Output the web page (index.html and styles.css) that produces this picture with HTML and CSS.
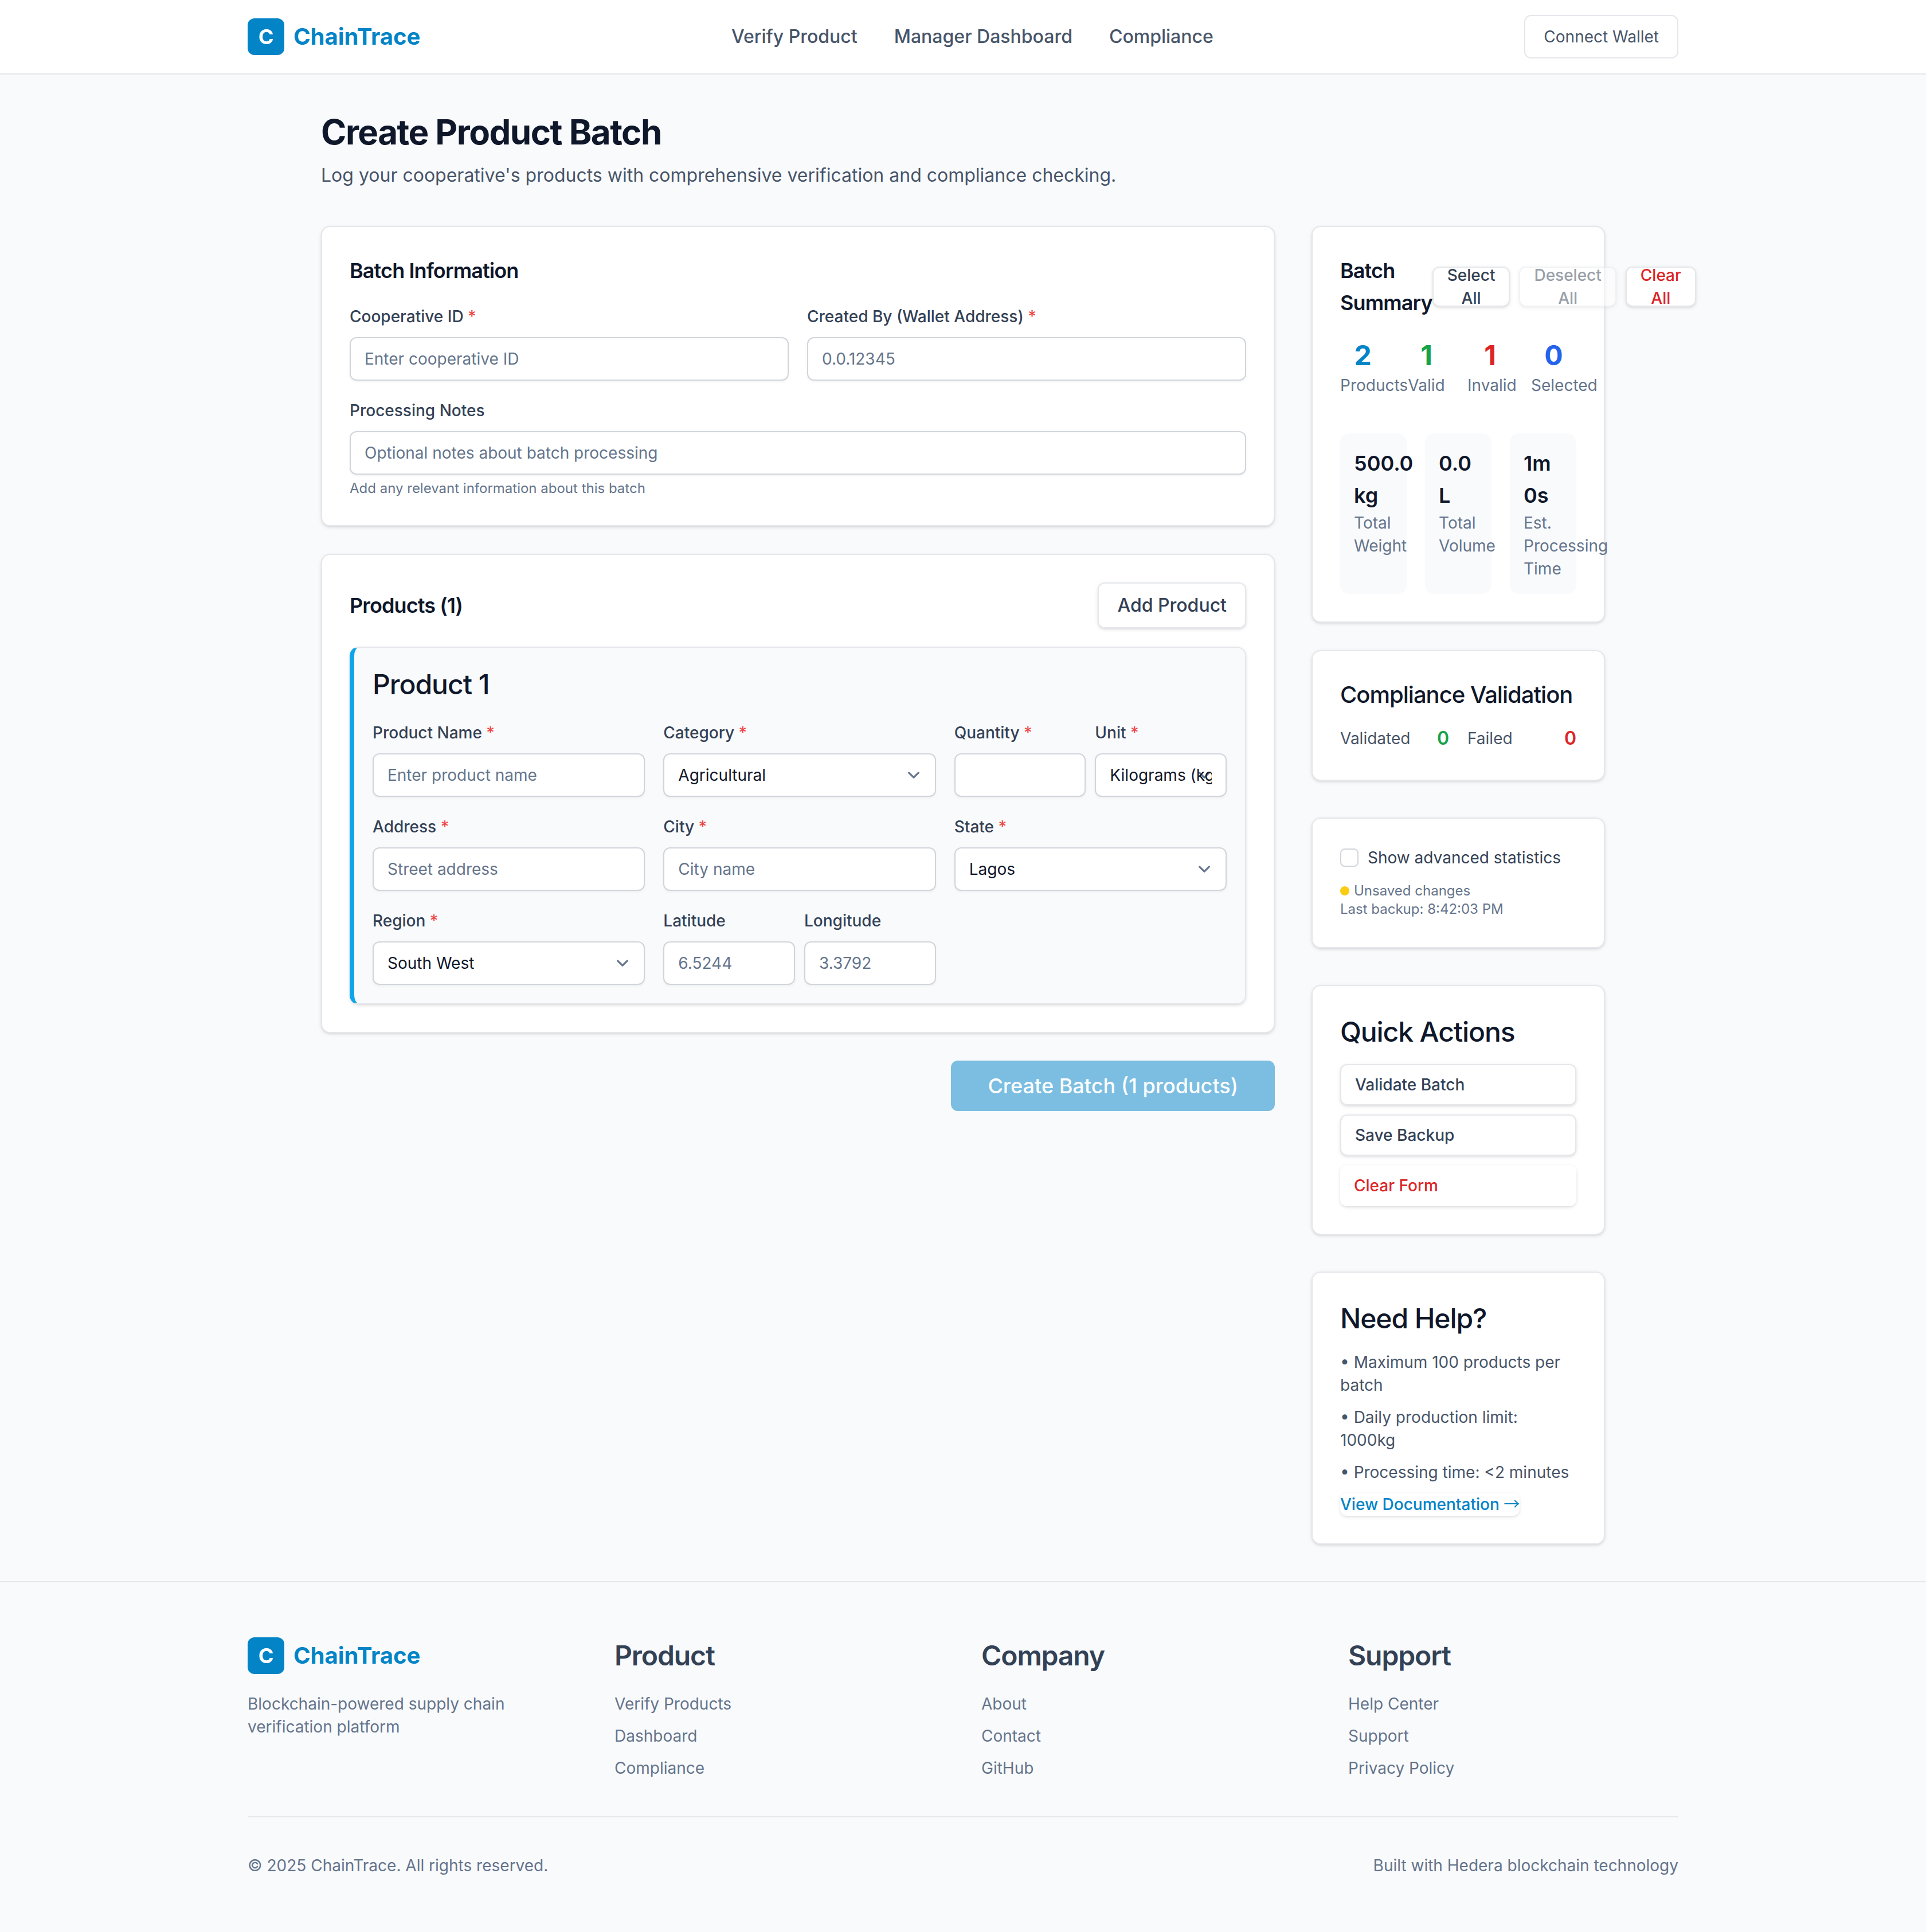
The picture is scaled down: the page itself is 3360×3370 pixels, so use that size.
FILE: index.html
```html
<!DOCTYPE html>
<html lang="en">
<head>
    <meta charset="UTF-8">
    <meta name="viewport" content="width=device-width, initial-scale=1.0">
    <title>ChainTrace - Create Product Batch</title>
    <link rel="stylesheet" href="styles.css">
</head>
<body>

    <header class="site-header">
        <div class="header-inner">
            <a class="brand" href="#"><span class="brand-mark">C</span><span class="brand-name">ChainTrace</span></a>
            <nav class="main-nav">
                <a href="#">Verify Product</a>
                <a href="#">Manager Dashboard</a>
                <a href="#">Compliance</a>
            </nav>
            <button class="btn btn-wallet">Connect Wallet</button>
        </div>
    </header>

    <main class="page">
        <div class="page-head">
            <h1>Create Product Batch</h1>
            <p>Log your cooperative's products with comprehensive verification and compliance checking.</p>
        </div>

        <div class="layout">
            <div class="form-col">
                <section class="card">
                    <h2 class="card-title">Batch Information</h2>
                    <div class="grid-2">
                        <div class="field">
                            <label>Cooperative ID <span class="req">*</span></label>
                            <input type="text" placeholder="Enter cooperative ID">
                        </div>
                        <div class="field">
                            <label>Created By (Wallet Address) <span class="req">*</span></label>
                            <input type="text" placeholder="0.0.12345">
                        </div>
                        <div class="field span-2">
                            <label>Processing Notes</label>
                            <input type="text" placeholder="Optional notes about batch processing">
                            <small class="hint">Add any relevant information about this batch</small>
                        </div>
                    </div>
                </section>

                <section class="card">
                    <div class="products-head">
                        <h2 class="card-title">Products (1)</h2>
                        <button class="btn btn-add">Add Product</button>
                    </div>
                    <div class="product-box">
                        <h3>Product 1</h3>
                        <div class="grid-3">
                            <div class="field">
                                <label>Product Name <span class="req">*</span></label>
                                <input type="text" placeholder="Enter product name">
                            </div>
                            <div class="field">
                                <label>Category <span class="req">*</span></label>
                                <select><option>Agricultural</option></select>
                            </div>
                            <div class="pair">
                                <div class="field">
                                    <label>Quantity <span class="req">*</span></label>
                                    <input type="text">
                                </div>
                                <div class="field">
                                    <label>Unit <span class="req">*</span></label>
                                    <select><option>Kilograms (kg)</option></select>
                                </div>
                            </div>
                            <div class="field">
                                <label>Address <span class="req">*</span></label>
                                <input type="text" placeholder="Street address">
                            </div>
                            <div class="field">
                                <label>City <span class="req">*</span></label>
                                <input type="text" placeholder="City name">
                            </div>
                            <div class="field">
                                <label>State <span class="req">*</span></label>
                                <select><option>Lagos</option></select>
                            </div>
                            <div class="field">
                                <label>Region <span class="req">*</span></label>
                                <select><option>South West</option></select>
                            </div>
                            <div class="pair">
                                <div class="field">
                                    <label>Latitude</label>
                                    <input type="text" placeholder="6.5244">
                                </div>
                                <div class="field">
                                    <label>Longitude</label>
                                    <input type="text" placeholder="3.3792">
                                </div>
                            </div>
                        </div>
                    </div>
                </section>

                <div class="submit-row">
                    <button class="btn-create">Create Batch (1 products)</button>
                </div>
            </div>

            <aside class="side-col">
                <section class="card">
                    <div class="summary-head">
                        <h2 class="card-title">Batch Summary</h2>
                        <div class="summary-actions">
                            <button class="btn btn-mini">Select All</button>
                            <button class="btn btn-mini is-disabled">Deselect All</button>
                            <button class="btn btn-mini is-danger">Clear All</button>
                        </div>
                    </div>
                    <div class="stat-row">
                        <div class="stat"><strong class="c-sky">2</strong><span>Products</span></div>
                        <div class="stat"><strong class="c-green">1</strong><span>Valid</span></div>
                        <div class="stat"><strong class="c-red">1</strong><span>Invalid</span></div>
                        <div class="stat"><strong class="c-blue">0</strong><span>Selected</span></div>
                    </div>
                    <div class="metric-row">
                        <div class="metric"><strong>500.0 kg</strong><span>Total Weight</span></div>
                        <div class="metric"><strong>0.0 L</strong><span>Total Volume</span></div>
                        <div class="metric"><strong>1m 0s</strong><span>Est. Processing Time</span></div>
                    </div>
                </section>

                <section class="card">
                    <h3 class="side-title side-title-sm">Compliance Validation</h3>
                    <div class="validation-row">
                        <div class="validation-item"><span>Validated</span><strong class="c-green">0</strong></div>
                        <div class="validation-item"><span>Failed</span><strong class="c-red">0</strong></div>
                    </div>
                </section>

                <section class="card card-loose">
                    <label class="check-row"><input type="checkbox"><span>Show advanced statistics</span></label>
                    <div class="backup-info">
                        <div class="unsaved"><span class="dot"></span>Unsaved changes</div>
                        <div>Last backup: 8:42:03 PM</div>
                    </div>
                </section>

                <section class="card card-loose">
                    <h3 class="side-title">Quick Actions</h3>
                    <div class="quick-list">
                        <button class="btn btn-quick">Validate Batch</button>
                        <button class="btn btn-quick">Save Backup</button>
                        <button class="btn btn-quick is-clear">Clear Form</button>
                    </div>
                </section>

                <section class="card card-loose">
                    <h3 class="side-title">Need Help?</h3>
                    <ul class="help-list">
                        <li>• Maximum 100 products per batch</li>
                        <li>• Daily production limit: 1000kg</li>
                        <li>• Processing time: &lt;2 minutes</li>
                    </ul>
                    <a class="doc-link" href="#">View Documentation <span class="arrow">→</span></a>
                </section>
            </aside>
        </div>
    </main>

    <footer class="site-footer">
        <div class="footer-inner">
            <div class="footer-cols">
                <div>
                    <a class="brand" href="#"><span class="brand-mark">C</span><span class="brand-name">ChainTrace</span></a>
                    <p class="tagline">Blockchain-powered supply chain verification platform</p>
                </div>
                <div class="footer-col">
                    <h4>Product</h4>
                    <a href="#">Verify Products</a>
                    <a href="#">Dashboard</a>
                    <a href="#">Compliance</a>
                </div>
                <div class="footer-col">
                    <h4>Company</h4>
                    <a href="#">About</a>
                    <a href="#">Contact</a>
                    <a href="#">GitHub</a>
                </div>
                <div class="footer-col">
                    <h4>Support</h4>
                    <a href="#">Help Center</a>
                    <a href="#">Support</a>
                    <a href="#">Privacy Policy</a>
                </div>
            </div>
            <div class="footer-bottom">
                <span>© 2025 ChainTrace. All rights reserved.</span>
                <span>Built with Hedera blockchain technology</span>
            </div>
        </div>
    </footer>

</body>
</html>
```

FILE: styles.css
```css
* {
    box-sizing: border-box;
}
body {
    margin: 0;
    font-family: Inter, "Noto Sans", sans-serif;
    font-size: 28px;
    line-height: 40px;
    color: #0f172a;
    background-color: #f9fafc;
}
a {
    color: inherit;
    text-decoration: none;
}
h1, h2, h3, h4, p, ul {
    margin: 0;
    padding: 0;
}
button, input, select {
    font-family: inherit;
}

/* header */
.site-header {
    background-color: #fff;
    border-bottom: 2px solid #e5e7eb;
}
.header-inner {
    max-width: 2560px;
    height: 128px;
    margin: 0 auto;
    padding: 0 32px;
    display: flex;
    align-items: center;
    justify-content: space-between;
}
.brand {
    display: flex;
    align-items: center;
    gap: 16px;
}
.brand-mark {
    width: 64px;
    height: 64px;
    border-radius: 12px;
    background-color: #0284c7;
    color: #fff;
    font-size: 36px;
    font-weight: 700;
    display: flex;
    align-items: center;
    justify-content: center;
}
.brand-name {
    font-size: 40px;
    line-height: 56px;
    font-weight: 700;
    color: #0284c7;
}
.main-nav {
    display: flex;
    gap: 64px;
    font-size: 32px;
    line-height: 48px;
    font-weight: 500;
    color: #475569;
}
.btn {
    background-color: #fff;
    border: 2px solid #e5e7eb;
    border-radius: 12px;
    box-shadow: 0 2px 6px rgba(0, 0, 0, 0.1), 0 2px 4px -2px rgba(0, 0, 0, 0.1);
    color: #334155;
    font-weight: 500;
    font-size: 28px;
    line-height: 40px;
}
.btn-wallet {
    height: 76px;
    padding: 0 32px;
    box-shadow: none;
    color: #475569;
    font-weight: 400;
}

/* page */
.page {
    max-width: 2304px;
    margin: 0 auto;
    padding: 64px 32px;
}
.page-head {
    margin-bottom: 64px;
}
.page-head h1 {
    font-size: 60px;
    line-height: 72px;
    font-weight: 700;
    letter-spacing: -1.5px;
}
.page-head p {
    margin-top: 16px;
    font-size: 32px;
    line-height: 48px;
    color: #475569;
}
.layout {
    display: grid;
    grid-template-columns: repeat(4, minmax(0, 1fr));
    gap: 64px;
    align-items: start;
}
.form-col {
    grid-column: span 3;
    display: flex;
    flex-direction: column;
    gap: 48px;
}
.side-col {
    display: flex;
    flex-direction: column;
    gap: 48px;
}
.card {
    background-color: #fff;
    border: 2px solid #e5e7eb;
    border-radius: 16px;
    box-shadow: 0 2px 6px rgba(0, 0, 0, 0.1), 0 2px 4px -2px rgba(0, 0, 0, 0.1);
    padding: 48px;
}
.card-loose {
    margin-top: 16px;
}
.card-title {
    font-size: 36px;
    line-height: 56px;
    font-weight: 600;
    letter-spacing: -0.9px;
    margin-bottom: 32px;
}

/* form */
.grid-2 {
    display: grid;
    grid-template-columns: repeat(2, minmax(0, 1fr));
    gap: 32px;
}
.span-2 {
    grid-column: span 2;
}
.grid-3 {
    display: grid;
    grid-template-columns: repeat(3, minmax(0, 1fr));
    gap: 32px;
}
.pair {
    display: grid;
    grid-template-columns: repeat(2, minmax(0, 1fr));
    gap: 16px;
}
.field label {
    display: block;
    margin-bottom: 16px;
    font-weight: 500;
    color: #334155;
}
.req {
    color: #ef4444;
}
.field input, .field select {
    display: block;
    width: 100%;
    height: 76px;
    padding: 16px 24px;
    background-color: #fff;
    border: 2px solid #d1d5db;
    border-radius: 12px;
    box-shadow: 0 2px 4px rgba(0, 0, 0, 0.05);
    font-size: 28px;
    line-height: 40px;
    color: #0f172a;
}
.field select {
    appearance: none;
    background-image: url("data:image/svg+xml,%3Csvg xmlns='http://www.w3.org/2000/svg' fill='none' viewBox='0 0 20 20'%3E%3Cpath stroke='%2364748b' stroke-linecap='round' stroke-linejoin='round' stroke-width='1.5' d='M6 8l4 4 4-4'/%3E%3C/svg%3E");
    background-repeat: no-repeat;
    background-position: right 16px center;
    background-size: 42px 42px;
}
.field input::placeholder {
    color: #64748b;
    opacity: 1;
}
.hint {
    display: block;
    margin-top: 8px;
    font-size: 24px;
    line-height: 32px;
    color: #64748b;
}
.products-head {
    display: flex;
    align-items: center;
    justify-content: space-between;
    margin-bottom: 32px;
}
.products-head .card-title {
    margin-bottom: 0;
}
.btn-add {
    height: 80px;
    padding: 0 32px;
    font-size: 32px;
    line-height: 48px;
}
.product-box {
    background-color: #f9fafc;
    border: 2px solid #e5e7eb;
    border-left: 8px solid #0ea5e9;
    border-radius: 16px;
    box-shadow: 0 2px 6px rgba(0, 0, 0, 0.1), 0 2px 4px -2px rgba(0, 0, 0, 0.1);
    padding: 32px;
}
.product-box h3 {
    font-size: 48px;
    line-height: 64px;
    font-weight: 500;
    letter-spacing: -1px;
    margin-bottom: 32px;
}
.submit-row {
    display: flex;
    justify-content: flex-end;
}
.btn-create {
    height: 88px;
    padding: 0 64px;
    background-color: #0284c7;
    border: none;
    border-radius: 12px;
    color: #fff;
    font-size: 36px;
    line-height: 56px;
    font-weight: 500;
    opacity: 0.5;
}

/* sidebar */
.summary-head {
    display: flex;
    align-items: center;
    margin-bottom: 32px;
}
.summary-head .card-title {
    width: min-content;
    margin-bottom: 0;
}
.summary-actions {
    display: flex;
    flex: none;
    gap: 16px;
}
.btn-mini {
    display: flex;
    align-items: center;
    justify-content: center;
    width: min-content;
    height: 70px;
    padding: 0 24px;
    text-align: center;
}
.is-disabled {
    opacity: 0.5;
}
.is-danger {
    color: #dc2626;
}
.stat-row {
    display: grid;
    grid-template-columns: repeat(4, minmax(0, 1fr));
    gap: 32px;
    text-align: center;
    margin-bottom: 64px;
}
.stat strong {
    display: block;
    font-size: 48px;
    line-height: 64px;
    font-weight: 700;
}
.stat span {
    display: block;
    color: #64748b;
}
.c-sky { color: #0284c7; }
.c-green { color: #16a34a; }
.c-red { color: #dc2626; }
.c-blue { color: #2563eb; }
.metric-row {
    display: grid;
    grid-template-columns: repeat(3, minmax(0, 1fr));
    gap: 32px;
}
.metric {
    background-color: #f9fafc;
    border-radius: 16px;
    padding: 24px;
}
.metric strong {
    display: block;
    font-size: 36px;
    line-height: 56px;
    font-weight: 600;
}
.metric span {
    display: block;
    color: #64748b;
}
.side-title {
    font-size: 48px;
    line-height: 64px;
    font-weight: 500;
    letter-spacing: -1.1px;
    margin-bottom: 24px;
}
.side-title-sm {
    font-size: 40px;
    line-height: 56px;
    letter-spacing: -1px;
}
.validation-row {
    display: grid;
    grid-template-columns: repeat(2, minmax(0, 1fr));
    gap: 32px;
}
.validation-item {
    display: flex;
    align-items: center;
    justify-content: space-between;
    color: #475569;
}
.validation-item strong {
    font-size: 32px;
    line-height: 48px;
    font-weight: 600;
}
.check-row {
    display: flex;
    align-items: center;
    gap: 16px;
    color: #334155;
}
.check-row input {
    appearance: none;
    width: 32px;
    height: 32px;
    margin: 0;
    background-color: #fff;
    border: 2px solid #d1d5db;
    border-radius: 8px;
}
.backup-info {
    margin-top: 22px;
    padding-bottom: 2px;
    font-size: 24px;
    line-height: 32px;
    color: #64748b;
}
.unsaved {
    display: flex;
    align-items: center;
    gap: 8px;
}
.dot {
    width: 16px;
    height: 16px;
    border-radius: 50%;
    background-color: #facc15;
}
.quick-list {
    display: flex;
    flex-direction: column;
    gap: 16px;
}
.btn-quick {
    height: 72px;
    padding: 0 24px;
    text-align: left;
}
.is-clear {
    border: none;
    color: #dc2626;
}
.help-list {
    list-style: none;
    color: #475569;
}
.help-list li {
    margin-bottom: 16px;
}
.doc-link {
    display: inline-block;
    background-color: #fff;
    border-radius: 12px;
    box-shadow: 0 2px 6px rgba(0, 0, 0, 0.1), 0 2px 4px -2px rgba(0, 0, 0, 0.1);
    color: #0284c7;
    font-weight: 500;
}
.arrow {
    font-family: "Noto Sans CJK JP", sans-serif;
    font-weight: 400;
    line-height: 28px;
}

/* footer */
.site-footer {
    border-top: 2px solid #e5e7eb;
    background-color: #f9fafc;
}
.footer-inner {
    max-width: 2560px;
    margin: 0 auto;
    padding: 96px 32px;
}
.footer-cols {
    display: grid;
    grid-template-columns: repeat(4, minmax(0, 1fr));
    gap: 64px;
    padding-bottom: 64px;
    border-bottom: 2px solid #e5e7eb;
}
.tagline {
    margin-top: 32px;
    color: #64748b;
}
.footer-col {
    display: flex;
    flex-direction: column;
    gap: 16px;
    color: #64748b;
}
.footer-col h4 {
    font-size: 48px;
    line-height: 64px;
    font-weight: 600;
    letter-spacing: -1.1px;
    color: #334155;
    margin-bottom: 16px;
}
.footer-bottom {
    display: flex;
    justify-content: space-between;
    padding-top: 64px;
    color: #64748b;
}
```
